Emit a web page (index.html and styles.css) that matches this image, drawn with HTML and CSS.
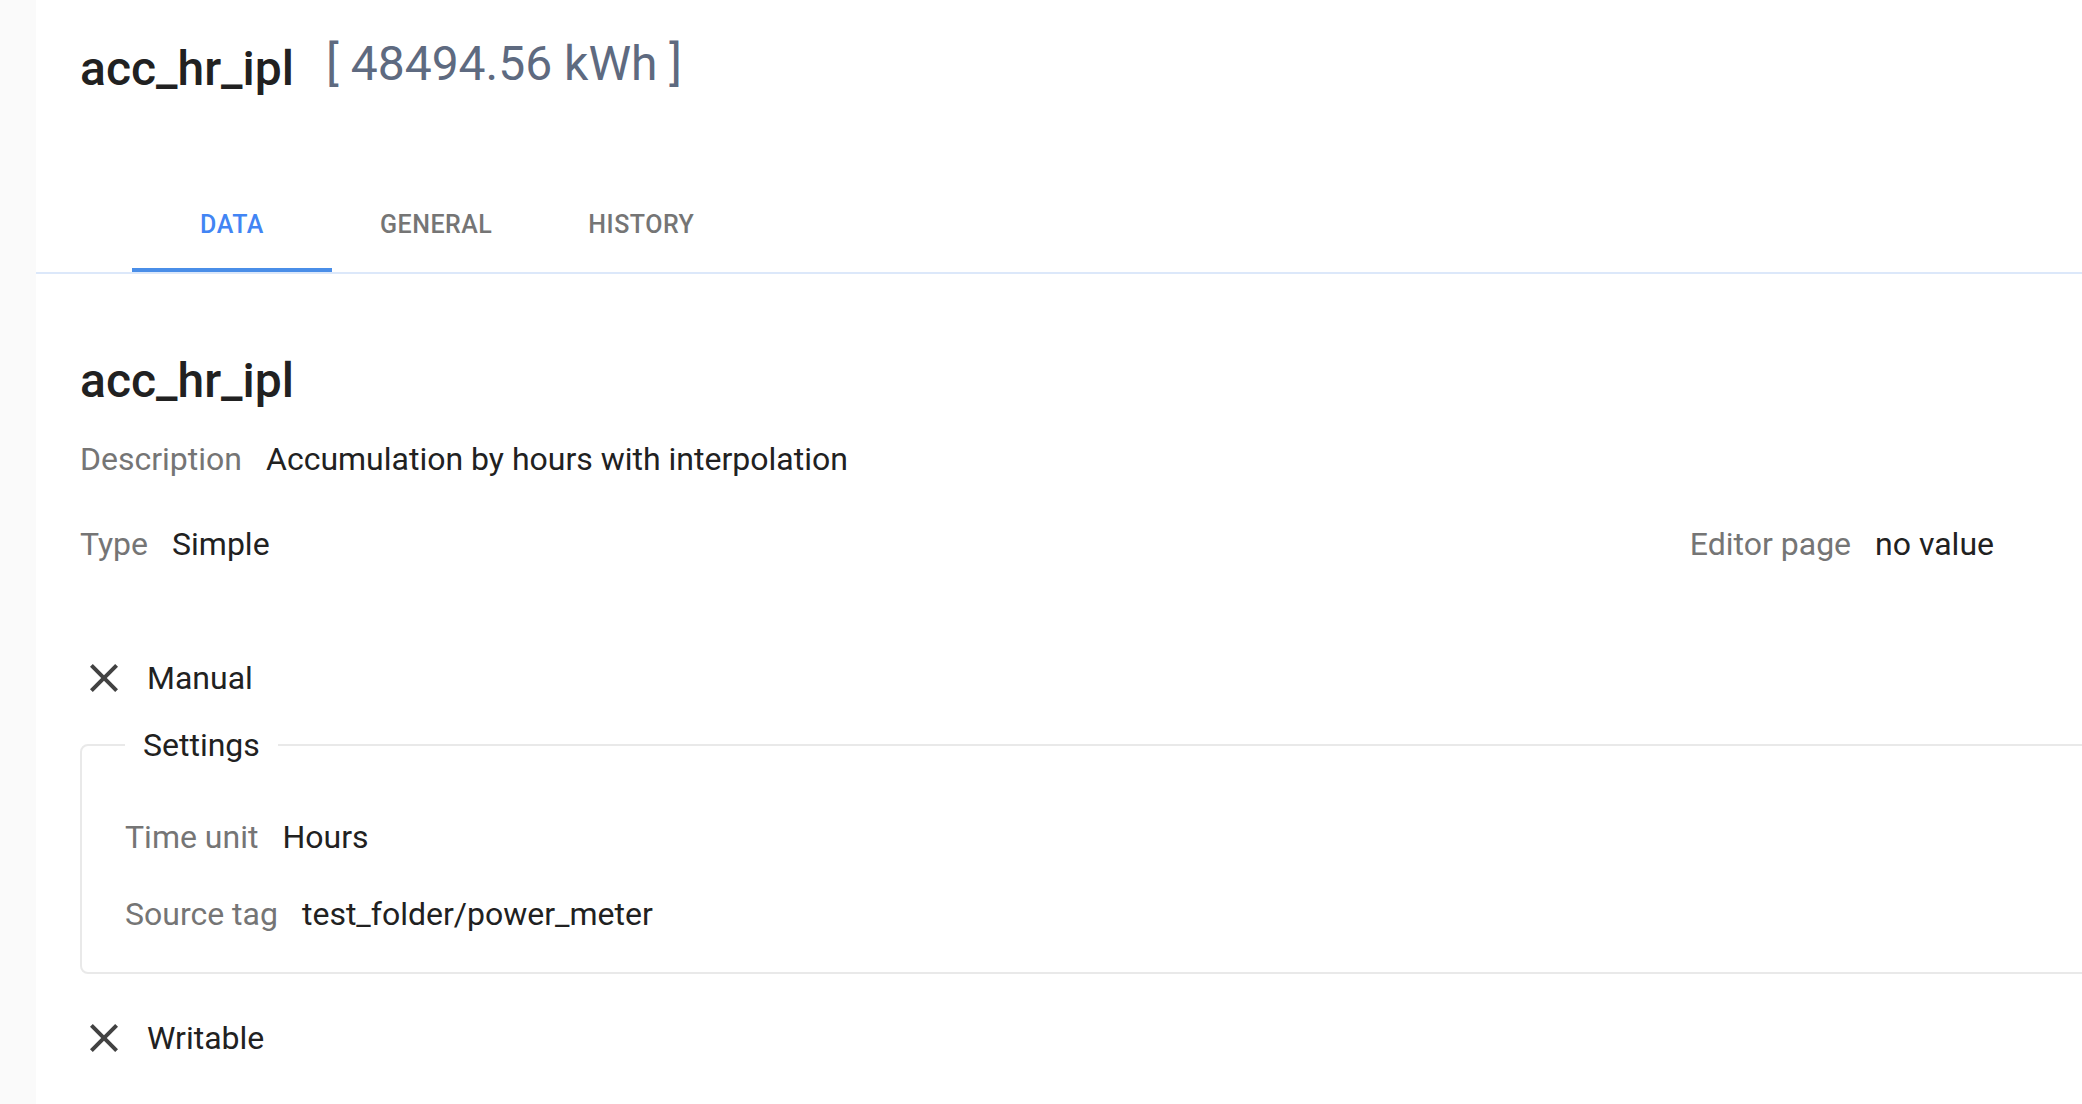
FILE: index.html
```html
<!DOCTYPE html>
<html lang="en">
<head>
<meta charset="utf-8">
<title>acc_hr_ipl</title>
<link rel="stylesheet" href="styles.css">
</head>
<body>
<div class="layout">
  <aside class="rail"></aside>
  <main class="main">
    <header class="header">
      <h1 class="title">acc_hr_ipl</h1>
      <span class="reading">[ 48494.56 kWh ]</span>
    </header>
    <nav class="tabs">
      <a class="tab tab-active">DATA</a>
      <a class="tab">GENERAL</a>
      <a class="tab">HISTORY</a>
    </nav>
    <section class="content">
      <h2 class="name">acc_hr_ipl</h2>
      <div class="field field-desc">
        <span class="label">Description</span>
        <span class="value">Accumulation by hours with interpolation</span>
      </div>
      <div class="field field-type">
        <span class="label">Type</span>
        <span class="value">Simple</span>
        <span class="editor">
          <span class="label">Editor page</span>
          <span class="value">no value</span>
        </span>
      </div>
      <div class="check check-manual">
        <svg class="xicon" viewBox="0 0 24 24" width="48" height="48"><path d="M19 6.41L17.59 5 12 10.59 6.41 5 5 6.41 10.59 12 5 17.59 6.41 19 12 13.41 17.59 19 19 17.59 13.41 12z"/></svg>
        <span class="check-text">Manual</span>
      </div>
      <fieldset class="settings">
        <legend class="legend">Settings</legend>
        <div class="field field-first">
          <span class="label">Time unit</span>
          <span class="value">Hours</span>
        </div>
        <div class="field field-second">
          <span class="label">Source tag</span>
          <span class="value">test_folder/power_meter</span>
        </div>
      </fieldset>
      <div class="check check-writable">
        <svg class="xicon" viewBox="0 0 24 24" width="48" height="48"><path d="M19 6.41L17.59 5 12 10.59 6.41 5 5 6.41 10.59 12 5 17.59 6.41 19 12 13.41 17.59 19 19 17.59 13.41 12z"/></svg>
        <span class="check-text">Writable</span>
      </div>
    </section>
  </main>
</div>
</body>
</html>
```
FILE: styles.css
```css
* { box-sizing: border-box; }
html, body { margin: 0; padding: 0; }
body {
  font-family: Roboto, "Liberation Sans", Arial, sans-serif;
  color: #212121;
  background: #ffffff;
  overflow: hidden;
}
.layout {
  display: flex;
  min-height: 100vh;
}
.rail {
  width: 36px;
  flex: none;
  background: #fafafa;
}
.main {
  flex: 1;
  min-width: 0;
  overflow: hidden;
}
.header {
  display: flex;
  align-items: flex-start;
  gap: 32px;
  padding: 36px 0 0 44px;
}
.title {
  margin: 5px 0 0;
  font-size: 48px;
  line-height: 56px;
  font-weight: 500;
  color: #212121;
}
.reading {
  font-size: 48px;
  line-height: 56px;
  font-weight: 400;
  color: #5e6a80;
}
.tabs {
  display: flex;
  margin-top: 111px;
  padding-left: 96px;
  border-bottom: 2px solid #dce8fa;
}
.tab {
  min-width: 200px;
  height: 64px;
  padding: 5px 48px 0;
  border-bottom: 4px solid transparent;
  font-size: 25px;
  line-height: 24px;
  font-weight: 500;
  color: #757575;
  text-align: center;
  letter-spacing: 0.5px;
}
.tab-active {
  color: #4285f4;
  border-bottom-color: #4a8ee8;
}
.content {
  padding: 79px 0 0 44px;
}
.name {
  margin: 0;
  font-size: 48px;
  line-height: 56px;
  font-weight: 500;
}
.field {
  display: flex;
  gap: 24px;
  font-size: 32px;
  line-height: 48px;
}
.label { color: #757575; }
.value { color: #212121; }
.field-desc { margin-top: 26px; }
.field-type {
  margin-top: 37px;
  padding-right: 88px;
}
.editor {
  display: flex;
  gap: 24px;
  margin-left: auto;
}
.check {
  display: flex;
  align-items: center;
  gap: 19px;
  height: 48px;
  font-size: 32px;
  line-height: 48px;
}
.check-manual { margin-top: 86px; }
.check-writable { margin-top: 40px; }
.xicon {
  display: block;
  flex: none;
  fill: #424242;
}
.settings {
  margin: 19px -24px 0 0;
  padding: 0 43px 34px;
  border: 2px solid #e9e9e9;
  border-radius: 8px;
  min-width: 0;
}
.legend {
  padding: 0 18px;
  font-size: 32px;
  line-height: 48px;
  color: #212121;
}
.field-first { margin-top: 44px; }
.field-second { margin-top: 29px; }
```
